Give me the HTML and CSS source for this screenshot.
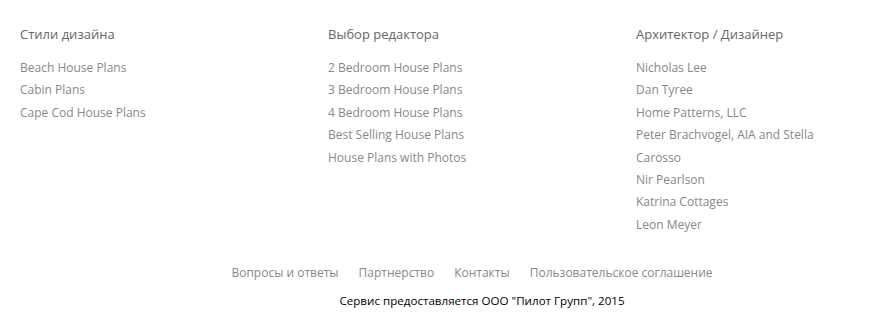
FILE: index.html
```html
<!DOCTYPE html>
<html lang="ru">
<head>
    <meta charset="UTF-8">
    <title>Footer</title>
    <link rel="stylesheet" href="styles.css">
</head>
<body>
    <footer class="site-footer">
        <div class="columns">
            <div class="column">
                <h3>Стили дизайна</h3>
                <ul>
                    <li><a href="#">Beach House Plans</a></li>
                    <li><a href="#">Cabin Plans</a></li>
                    <li><a href="#">Cape Cod House Plans</a></li>
                </ul>
            </div>
            <div class="column">
                <h3>Выбор редактора</h3>
                <ul>
                    <li><a href="#">2 Bedroom House Plans</a></li>
                    <li><a href="#">3 Bedroom House Plans</a></li>
                    <li><a href="#">4 Bedroom House Plans</a></li>
                    <li><a href="#">Best Selling House Plans</a></li>
                    <li><a href="#">House Plans with Photos</a></li>
                </ul>
            </div>
            <div class="column last">
                <h3>Архитектор / Дизайнер</h3>
                <ul>
                    <li><a href="#">Nicholas Lee</a></li>
                    <li><a href="#">Dan Tyree</a></li>
                    <li><a href="#">Home Patterns, LLC</a></li>
                    <li><a href="#">Peter Brachvogel, AIA and Stella Carosso</a></li>
                    <li><a href="#">Nir Pearlson</a></li>
                    <li><a href="#">Katrina Cottages</a></li>
                    <li><a href="#">Leon Meyer</a></li>
                </ul>
            </div>
        </div>
        <div class="bottom">
            <nav class="bottom-links">
                <a href="#">Вопросы и ответы</a>
                <a href="#">Партнерство</a>
                <a href="#">Контакты</a>
                <a href="#">Пользовательское соглашение</a>
            </nav>
            <p class="copyright">Сервис предоставляется ООО "Пилот Групп", 2015</p>
        </div>
    </footer>
</body>
</html>
```

FILE: styles.css
```css
body {
    margin: 0;
    background: #fff;
    font-family: "Open Sans", Arial, sans-serif;
}

.site-footer {
    padding: 24px 0 0 20px;
}

.columns {
    display: flex;
}

.column {
    width: 308px;
    flex-shrink: 0;
}

.column.last {
    width: 185px;
}

.column h3 {
    margin: 0 0 13px;
    font-size: 13px;
    font-weight: normal;
    line-height: 20px;
    color: #666;
}

.column ul {
    list-style: none;
    margin: 0;
    padding: 0;
}

.column li {
    font-size: 12px;
    line-height: 22.4px;
}

.column a {
    color: #888;
    text-decoration: none;
}

/* bottom block is centered a bit right of the viewport center */
.bottom {
    padding-left: 64px;
}

.bottom-links {
    display: flex;
    justify-content: center;
    margin-top: 26px;
    line-height: 22px;
}

.bottom-links a {
    margin-right: 20px;
    font-size: 12px;
    color: #888;
    text-decoration: none;
}

.copyright {
    margin: 7px 0 0;
    text-align: center;
    font-size: 11.6px;
    line-height: 20px;
    color: #000;
}
```
